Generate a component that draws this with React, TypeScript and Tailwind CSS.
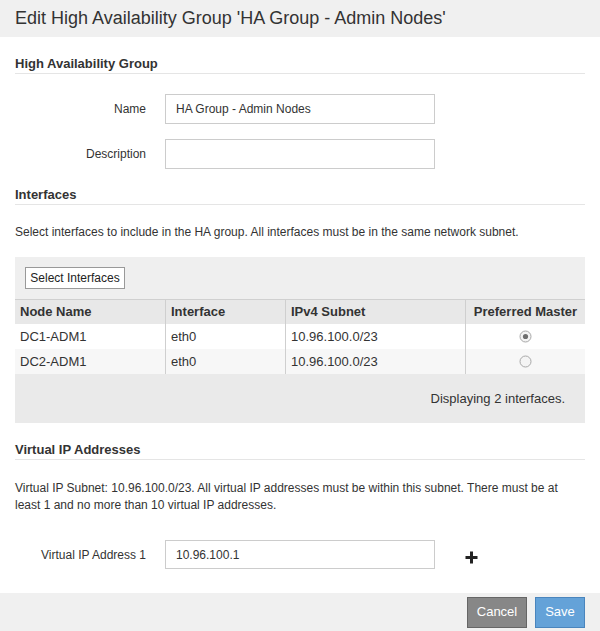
import React from "react";

function Radio({ checked }: { checked?: boolean }) {
  return (
    <svg width="13" height="13" viewBox="0 0 13 13" className="inline-block">
      <circle cx="6.5" cy="6.5" r="5.5" fill="#f4f4f4" stroke="#a8a8a8" strokeWidth="1" />
      {checked && <circle cx="6.5" cy="6.5" r="2.6" fill="#6f6f6f" />}
    </svg>
  );
}

function SectionHeading({ children, mt }: { children: React.ReactNode; mt: string }) {
  return (
    <div className={`${mt} border-b border-[#e5e5e5] text-[13px] font-bold leading-[18px] text-[#333]`}>
      {children}
    </div>
  );
}

export default function App() {
  const rows = [
    { node: "DC1-ADM1", iface: "eth0", subnet: "10.96.100.0/23", checked: true, bg: "bg-white" },
    { node: "DC2-ADM1", iface: "eth0", subnet: "10.96.100.0/23", checked: false, bg: "bg-[#f7f7f7]" },
  ];
  return (
    <div className="w-[600px] h-[631px] bg-white text-[#333] font-['Liberation_Sans',Arial,sans-serif] flex flex-col overflow-hidden">
      <div className="h-[37px] shrink-0 bg-[#f0f0f0] px-[15px] flex items-center text-[18px] text-[#333]">
        Edit High Availability Group 'HA Group - Admin Nodes'
      </div>

      <div className="px-[15px] flex flex-col">
        <SectionHeading mt="mt-[18px]">High Availability Group</SectionHeading>

        <div className="mt-[20px] flex items-center">
          <div className="w-[131px] text-right text-[12px]">Name</div>
          <div className="ml-[19px] w-[270px] h-[30px] border border-[#ccc] flex items-center px-[10px] text-[12px]">
            HA Group - Admin Nodes
          </div>
        </div>
        <div className="mt-[15px] flex items-center">
          <div className="w-[131px] text-right text-[12px]">Description</div>
          <div className="ml-[19px] w-[270px] h-[30px] border border-[#ccc]" />
        </div>

        <SectionHeading mt="mt-[17px]">Interfaces</SectionHeading>
        <div className="mt-[19px] text-[12px] leading-[17px]">
          Select interfaces to include in the HA group. All interfaces must be in the same network subnet.
        </div>

        <div className="mt-[16px] h-[166px] bg-[#efefef] flex flex-col">
          <div className="pt-[10px] pl-[10px]">
            <div className="w-[100px] h-[22px] bg-white border border-[#999] flex items-center justify-center text-[12px] text-[#222]">
              Select Interfaces
            </div>
          </div>
          <div className="mt-[10px] border-t border-[#d0d0d0]">
            <div className="grid grid-cols-[150px_120px_180px_120px] h-[24px] bg-[#e8e8e8] text-[13px] font-bold">
              <div className="pl-[5px] flex items-center">Node Name</div>
              <div className="pl-[5px] flex items-center border-l border-[#cfcfcf]">Interface</div>
              <div className="pl-[5px] flex items-center border-l border-[#cfcfcf]">IPv4 Subnet</div>
              <div className="flex items-center justify-center border-l border-[#cfcfcf]">Preferred Master</div>
            </div>
            {rows.map((r) => (
              <div key={r.node} className={`grid grid-cols-[150px_120px_180px_120px] h-[25px] ${r.bg} text-[13px]`}>
                <div className="pl-[5px] flex items-center">{r.node}</div>
                <div className="pl-[5px] flex items-center border-l border-[#cfcfcf]">{r.iface}</div>
                <div className="pl-[5px] flex items-center border-l border-[#cfcfcf]">{r.subnet}</div>
                <div className="flex items-center justify-center border-l border-[#cfcfcf]">
                  <Radio checked={r.checked} />
                </div>
              </div>
            ))}
          </div>
          <div className="flex-1 bg-[#eaeaea] flex items-center justify-end pr-[20px] text-[13px]">
            Displaying 2 interfaces.
          </div>
        </div>

        <SectionHeading mt="mt-[18px]">Virtual IP Addresses</SectionHeading>
        <div className="mt-[20px] text-[12px] leading-[17px]">
          Virtual IP Subnet: 10.96.100.0/23. All virtual IP addresses must be within this subnet. There must be at
          least 1 and no more than 10 virtual IP addresses.
        </div>

        <div className="mt-[26px] flex items-center">
          <div className="w-[131px] text-right text-[12px]">Virtual IP Address 1</div>
          <div className="ml-[19px] w-[270px] h-[29px] border border-[#ccc] flex items-center px-[10px] text-[12px]">
            10.96.100.1
          </div>
          <svg width="13" height="13" viewBox="0 0 13 13" className="ml-[30px] mt-[6px]">
            <path d="M6.5 0.5 V12.5 M0.5 6.5 H12.5" stroke="#222" strokeWidth="3" />
          </svg>
        </div>
      </div>

      <div className="mt-auto h-[38px] shrink-0 bg-[#f0f0f0] flex items-center justify-end gap-[8px] pr-[15px]">
        <div className="w-[60px] h-[31px] bg-[#878787] border border-[#666] flex items-center justify-center text-[13px] text-white">
          Cancel
        </div>
        <div className="w-[50px] h-[31px] bg-[#64a2d8] border border-[#4a85bd] flex items-center justify-center text-[13px] text-white">
          Save
        </div>
      </div>
    </div>
  );
}
